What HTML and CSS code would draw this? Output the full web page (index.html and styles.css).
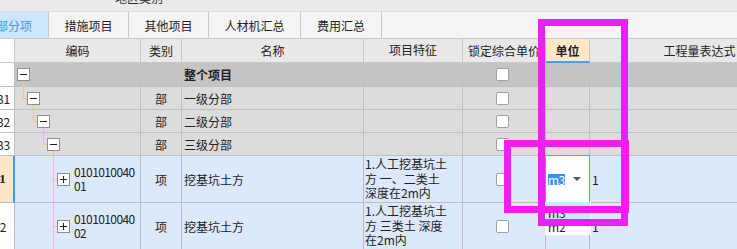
FILE: index.html
```html
<!DOCTYPE html>
<html lang="zh-CN">
<head>
    <meta charset="UTF-8">
    <meta name="viewport" content="width=device-width, initial-scale=1.0">
    <title>分部分项 | 工程量清单</title>
    <link rel="stylesheet" href="styles.css">
</head>
<body>
    <div class="toolbar"><span class="toolbar-label">地区类别</span></div>

    <ul class="tabs">
        <li class="tab first active">分部分项</li>
        <li class="tab">措施项目</li>
        <li class="tab">其他项目</li>
        <li class="tab wide">人材机汇总</li>
        <li class="tab last">费用汇总</li>
    </ul>

    <div class="sheet">
        <div class="row head">
            <div class="cell num"></div>
            <div class="cell code">编码</div>
            <div class="cell type">类别</div>
            <div class="cell name">名称</div>
            <div class="cell feat">项目特征</div>
            <div class="cell lock">锁定综合单价</div>
            <div class="cell unit">单位</div>
            <div class="cell expr">工程量表达式</div>
        </div>

        <div class="row root">
            <div class="cell num"></div>
            <div class="cell code lv0"><span class="toggle"></span></div>
            <div class="cell type"></div>
            <div class="cell name">整个项目</div>
            <div class="cell feat"></div>
            <div class="cell lock"><span class="check"></span></div>
            <div class="cell unit"></div>
            <div class="cell expr"></div>
        </div>

        <div class="row group">
            <div class="cell num"><span>B1</span></div>
            <div class="cell code lv1"><span class="stub"></span><span class="toggle"></span></div>
            <div class="cell type">部</div>
            <div class="cell name">一级分部</div>
            <div class="cell feat"></div>
            <div class="cell lock"><span class="check"></span></div>
            <div class="cell unit"></div>
            <div class="cell expr"></div>
        </div>

        <div class="row group">
            <div class="cell num"><span>B2</span></div>
            <div class="cell code lv2"><span class="stub"></span><span class="toggle"></span></div>
            <div class="cell type">部</div>
            <div class="cell name">二级分部</div>
            <div class="cell feat"></div>
            <div class="cell lock"><span class="check"></span></div>
            <div class="cell unit"></div>
            <div class="cell expr"></div>
        </div>

        <div class="row group">
            <div class="cell num"><span>B3</span></div>
            <div class="cell code lv3"><span class="stub"></span><span class="toggle"></span></div>
            <div class="cell type">部</div>
            <div class="cell name">三级分部</div>
            <div class="cell feat"></div>
            <div class="cell lock"><span class="check"></span></div>
            <div class="cell unit"></div>
            <div class="cell expr"></div>
        </div>

        <div class="row item">
            <div class="cell num current"><span>1</span></div>
            <div class="cell code"><span class="stub"></span><span class="toggle plus"></span><span class="code-text">010101004001</span></div>
            <div class="cell type">项</div>
            <div class="cell name">挖基坑土方</div>
            <div class="cell feat"><p>1.人工挖基坑土方 一、二类土 深度在2m内</p></div>
            <div class="cell lock"><span class="check"></span></div>
            <div class="cell unit editing">
                <span class="sel">m3</span>
                <span class="caret"></span>
                <ul class="dropdown">
                    <li class="hover">m3</li>
                    <li>m2</li>
                </ul>
            </div>
            <div class="cell expr">1</div>
        </div>

        <div class="row item">
            <div class="cell num"><span>2</span></div>
            <div class="cell code"><span class="stub"></span><span class="toggle plus"></span><span class="code-text">010101004002</span></div>
            <div class="cell type">项</div>
            <div class="cell name">挖基坑土方</div>
            <div class="cell feat"><p>1.人工挖基坑土方 三类土 深度在2m内</p></div>
            <div class="cell lock"><span class="check"></span></div>
            <div class="cell unit"></div>
            <div class="cell expr">1</div>
        </div>
    </div>

    <!-- annotation boxes drawn over the screenshot -->
    <div class="mark mark-a"></div>
    <div class="mark mark-b"></div>
</body>
</html>
```

FILE: styles.css
```css
* {
    margin: 0;
    padding: 0;
    box-sizing: border-box;
}
body {
    position: relative;
    width: 737px;
    height: 249px;
    overflow: hidden;
    background-color: #f5f5f5;
    color: #222;
    font-family: "Noto Sans CJK SC", sans-serif;
    font-size: 12px;
}
.toolbar {
    height: 11px;
    overflow: hidden;
    background-color: #ebebeb;
}
.toolbar-label {
    display: block;
    margin-top: -9px;
    padding-left: 115px;
    line-height: 14px;
    color: #333;
}
.tabs {
    display: flex;
    list-style: none;
    height: 28px;
    background-color: #f5f5f5;
    border-top: 1px solid #dcdcdc;
    border-bottom: 1px solid #c8c8c8;
}
.tab {
    flex: none;
    display: flex;
    align-items: center;
    justify-content: center;
    width: 80px;
    border-right: 1px solid #c8c8c8;
}
.tab.first {
    width: 81px;
    margin-left: -32px;
}
.tab.wide {
    width: 92px;
}
.tab.last {
    width: 81px;
}
.tab.active {
    background-color: #cce6fc;
    color: #4a94da;
}
.sheet {
    width: 810px;
}
.row {
    display: grid;
    grid-template-columns: 15px 126px 41px 182px 99px 83px 44px 220px;
}
.head {
    height: 24px;
}
.root {
    height: 24px;
}
.group {
    height: 23px;
}
.item {
    height: 47px;
}
.cell {
    display: flex;
    align-items: center;
    min-width: 0;
    white-space: nowrap;
    border-right: 1px solid #c0c0c0;
    border-bottom: 1px solid #c0c0c0;
}
.head .cell {
    justify-content: center;
    padding: 0;
    background-color: #e8e8e8;
    border-color: #c8c8c8;
}
.head .unit {
    background-color: #ffe7c8;
    font-weight: bold;
    border-bottom: 2px solid #4a9ff4;
}
.root .cell {
    background-color: #c4c4c4;
}
.root .name {
    font-weight: bold;
}
.group .cell {
    background-color: #dcdcdc;
}
.item .cell {
    background-color: #dce8fc;
    border-color: #bcbcbc;
}
.row .num {
    justify-content: center;
    overflow: hidden;
    background-color: #fff;
}
.num span {
    margin-right: 8px;
}
.row .num.current {
    background-color: #ffe6c6;
    border-right: 2px solid #3d9bff;
    font: bold 13px "Liberation Serif", serif;
}
.type {
    justify-content: center;
}
.name {
    padding-left: 2px;
}
.feat {
    padding: 0 12px 0 1px;
    white-space: normal;
    line-height: 14.5px;
}
.lock {
    justify-content: center;
    padding-right: 3px;
}
.expr {
    padding-left: 2px;
}
.unit {
    padding-left: 2px;
}

/* tree column */
.code {
    padding-left: 2px;
}
.code.lv1 {
    padding-left: 8px;
}
.code.lv2 {
    padding-left: 18px;
}
.code.lv3 {
    padding-left: 28px;
}
.item .code {
    padding-left: 38px;
}
.root .code.lv0 {
    background: linear-gradient(#f9c47c, #f9c47c) 8px 100% / 1px 5px no-repeat, #c4c4c4;
}
.group .code.lv1 {
    background: linear-gradient(#f9c47c, #f9c47c) 8px 0 / 1px 11px no-repeat,
                linear-gradient(#f9c47c, #f9c47c) 18px 100% / 1px 5px no-repeat, #dcdcdc;
}
.group .code.lv2 {
    background: linear-gradient(#f9c47c, #f9c47c) 18px 0 / 1px 11px no-repeat,
                linear-gradient(#f9c47c, #f9c47c) 28px 100% / 1px 5px no-repeat, #dcdcdc;
}
.group .code.lv3 {
    background: linear-gradient(#f9c47c, #f9c47c) 28px 0 / 1px 11px no-repeat,
                linear-gradient(#f9c47c, #f9c47c) 38px 100% / 1px 5px no-repeat, #dcdcdc;
}
.item .code {
    background: linear-gradient(#f9c47c, #f9c47c) 38px 0 / 1px 100% no-repeat, #dce8fc;
}
.stub {
    flex: none;
    width: 4px;
    height: 1px;
    background-color: #f9c47c;
}
.toggle {
    flex: none;
    width: 13px;
    height: 13px;
    border: 1px solid #8e8e8e;
    background: #fff linear-gradient(#222, #222) center / 7px 1px no-repeat;
}
.toggle.plus {
    background: linear-gradient(#222, #222) center / 7px 1px no-repeat,
                linear-gradient(#222, #222) center / 1px 7px no-repeat, #fff;
}
.code-text {
    width: 62px;
    margin-left: 4px;
    white-space: normal;
    word-break: break-all;
    line-height: 14px;
    letter-spacing: -0.6px;
}
.check {
    flex: none;
    width: 13px;
    height: 13px;
    border: 1px solid #a0a0a0;
    border-radius: 2px;
    background-color: #fff;
}

/* cell in edit mode */
.row .unit.editing {
    position: relative;
    z-index: 1;
    background-color: #fff;
    border-color: #5a9ff0;
    box-shadow: -1px 0 #5a9ff0, 0 -1px #5a9ff0, -1px -1px #5a9ff0;
}
.sel {
    display: inline-block;
    height: 11px;
    line-height: 11px;
    background-color: #3390ff;
    color: #fff;
    letter-spacing: -0.5px;
}
.caret {
    width: 0;
    height: 0;
    margin-left: auto;
    margin-right: 8px;
    border-left: 4px solid transparent;
    border-right: 4px solid transparent;
    border-top: 4px solid #555;
}
.dropdown {
    position: absolute;
    left: -1px;
    top: 46px;
    width: 46px;
    list-style: none;
    background-color: #fff;
    border: 1px solid #fff;
    border-top: 0;
}
.dropdown li {
    height: 14px;
    line-height: 14px;
    padding-left: 2px;
}
.dropdown li.hover {
    height: 18px;
    padding-top: 4px;
    background-color: #cce8ff;
}

/* annotation */
.mark {
    position: absolute;
    z-index: 5;
    border: 7px solid #f01ef0;
}
.mark-a {
    left: 538px;
    top: 19px;
    width: 90px;
    height: 207px;
}
.mark-b {
    left: 504px;
    top: 140px;
    width: 125px;
    height: 73px;
}
```
